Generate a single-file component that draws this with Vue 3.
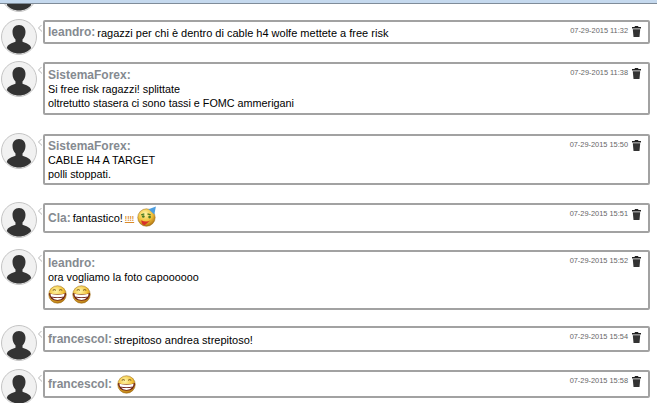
<template>
  <div class="chat">
    <div class="top-bar"></div>
    <div class="cut-row">
      <svg class="avatar cut-avatar" viewBox="0 0 36 36"><use href="#person" /></svg>
    </div>

    <svg width="0" height="0" class="defs">
      <defs>
        <g id="person">
          <circle cx="18" cy="18" r="17.500" fill="#f1f1f1" stroke="#c4c4c4" stroke-width="1" />
          <path d="M18 6c-4.200 0-6.500 3.200-6.500 7 0 3 1.300 5.800 3 7.500v2.300c-3.500 1.200-8 2.400-8.700 6.200 2.700 3.300 7 5.500 12.200 5.500s9.500-2.200 12.200-5.500c-.7-3.800-5.200-5-8.700-6.200v-2.300c1.700-1.700 3-4.500 3-7.500 0-3.800-2.300-7-6.500-7z" fill="#333" />
        </g>
        <radialGradient id="ball" cx="42%" cy="30%" r="75%">
          <stop offset="0" stop-color="#fff6a8" />
          <stop offset="0.55" stop-color="#f2c23a" />
          <stop offset="1" stop-color="#a9690c" />
        </radialGradient>
        <g id="grin">
          <circle cx="9" cy="9" r="8.300" fill="url(#ball)" stroke="#9a6a14" stroke-width="0.500" />
          <path d="M4.500 5q1.500-1.200 3 0M10.500 5q1.500-1.200 3 0" fill="none" stroke="#6b4a10" stroke-width="0.900" />
          <path d="M.8 7.500q8.200 3 16.400 0q-.4 7-8.200 7.500q-7.800-.5-8.200-7.500z" fill="#6e1f14" />
          <path d="M2.300 8.400q6.700 2 13.400 0l-.5 2.500q-6.200 1.400-12.400 0z" fill="#fff" />
          <path d="M3.800 11.800q5.200 1.100 10.400 0q-1.500 2.200-5.200 2.400q-3.700-.2-5.200-2.400z" fill="#fff" />
        </g>
      </defs>
    </svg>

    <div v-for="m in messages" :key="m.time" class="row" :class="m.cls">
      <svg class="avatar" viewBox="0 0 36 36"><use href="#person" /></svg>
      <div class="box">
        <svg class="tail" width="5" height="7" viewBox="0 0 5 7">
          <path d="M4 0h1M3 1h1M2 2h1M1 3h1M2 4h1M3 5h1M4 6h1" stroke="#b5b5b5" stroke-width="1" />
        </svg>
        <div class="meta">
          <span class="time">{{ m.time }}</span>
          <svg class="trash" width="9" height="11" viewBox="0 0 9 11">
            <path d="M3 0h3l.5 1H9v1.500H0V1h2.500z" fill="#222" />
            <path d="M.8 3.200h7.400L7.500 11h-6z" fill="#333" />
          </svg>
        </div>
        <template v-if="m.block">
          <div class="name">{{ m.name }}:</div>
          <div v-for="l in m.lines" :key="l" class="text">{{ l }}</div>
          <div v-if="m.grins" class="smileys">
            <svg v-for="n in m.grins" :key="n" class="smiley" viewBox="0 0 18 18"><use href="#grin" /></svg>
          </div>
        </template>
        <div v-else class="inline">
          <span class="name">{{ m.name }}:</span>
          <span v-if="m.text" class="text">{{ m.text }}</span>
          <span v-if="m.party" class="bang">!!!!</span>
          <svg v-if="m.party" class="smiley party" viewBox="0 0 20 20">
            <circle cx="9" cy="11" r="8.300" fill="url(#ball)" stroke="#9a6a14" stroke-width="0.500" />
            <path d="M11 3l7-2.500-1.500 7.500z" fill="#4f9fe0" />
            <path d="M4 8.500l3-1M10 7.500l3 1" stroke="#4b7a20" stroke-width="1.200" />
            <circle cx="6" cy="10" r="1.300" fill="#4b7a20" />
            <circle cx="12" cy="10.500" r="1.300" fill="#4b7a20" />
            <path d="M4 13.500q5 2.500 9 0l-5.500 4.500q-3 .5-3.500-4.500z" fill="#d8302a" />
          </svg>
          <svg v-if="m.grins" class="smiley grin-inline" viewBox="0 0 18 18"><use href="#grin" /></svg>
        </div>
      </div>
    </div>
  </div>
</template>

<script setup>
const messages = [
  { cls: 'r1', name: 'leandro', text: 'ragazzi per chi è dentro di cable h4 wolfe mettete a free risk', time: '07-29-2015 11:32' },
  { cls: 'r2', name: 'SistemaForex', block: true, lines: ['Si free risk ragazzi! splittate', 'oltretutto stasera ci sono tassi e FOMC ammerigani'], time: '07-29-2015 11:38' },
  { cls: 'r3', name: 'SistemaForex', block: true, lines: ['CABLE H4 A TARGET', 'polli stoppati.'], time: '07-29-2015 15:50' },
  { cls: 'r4', name: 'Cla', text: 'fantastico!', party: true, time: '07-29-2015 15:51' },
  { cls: 'r5', name: 'leandro', block: true, lines: ['ora vogliamo la foto capoooooo'], grins: 2, time: '07-29-2015 15:52' },
  { cls: 'r6', name: 'francescol', text: 'strepitoso andrea strepitoso!', time: '07-29-2015 15:54' },
  { cls: 'r7', name: 'francescol', grins: 1, time: '07-29-2015 15:58' }
]
</script>

<style scoped>
.chat {
  width: 657px;
  height: 403px;
  overflow: hidden;
  background: #fff;
  font-family: "Liberation Sans", Arial, sans-serif;
}

.defs {
  position: absolute;
}

.top-bar {
  height: 4px;
  background: #c5d9ee;
  border-bottom: 1px solid #7f8c99;
  box-sizing: border-box;
}

.cut-row {
  height: 8px;
  overflow: hidden;
  display: flex;
  align-items: flex-end;
  padding-left: 1px;
  margin-bottom: 7px;
}

.cut-avatar {
  flex-shrink: 0;
}

.row {
  display: flex;
  align-items: flex-start;
  padding-left: 1px;
  padding-right: 7px;
}

.avatar {
  width: 36px;
  height: 36px;
  flex-shrink: 0;
  margin-right: 6px;
}

.box {
  position: relative;
  flex: 1;
  box-sizing: border-box;
  margin-top: 1px;
  border: 2px solid #a2a2a2;
  border-radius: 2px;
  padding: 0 0 0 3px;
}

.tail {
  position: absolute;
  left: -8px;
  top: 3px;
}

.meta {
  position: absolute;
  right: 7px;
  top: 3px;
  display: flex;
  align-items: center;
  gap: 4px;
}

.time {
  font-size: 7.400px;
  color: #666;
  line-height: 12px;
}

.trash {
  display: block;
}

.name {
  font-size: 12px;
  font-weight: bold;
  color: #858a90;
  line-height: 14px;
}

.text {
  font-size: 10.800px;
  color: #000;
  line-height: 14px;
}

.inline .text {
  font-size: 11px;
}

.r1 .inline .text,
.r6 .inline .text {
  margin-top: 2px;
}

.inline {
  display: flex;
  align-items: center;
  gap: 2px;
  height: 100%;
}

.bang {
  font-size: 7px;
  font-weight: bold;
  color: #d98a2a;
  text-decoration: underline;
}

.smileys {
  display: flex;
  gap: 5px;
  margin-top: 1px;
}

.smiley {
  width: 19px;
  height: 19px;
  display: block;
}

.party {
  width: 21px;
  height: 21px;
  margin: -3px 0 0 1px;
}

.grin-inline {
  margin-left: 3px;
}

.r1 { margin-bottom: 6px; }
.r1 .box { height: 24px; }
.r2 { margin-bottom: 18px; }
.r2 .box { height: 53px; padding-top: 4px; }
.r3 { margin-bottom: 17px; }
.r3 .box { height: 51px; padding-top: 3px; }
.r4 { margin-bottom: 11px; }
.r4 .box { height: 30px; }
.r5 { margin-bottom: 15px; }
.r5 .box { height: 60px; padding-top: 4px; }
.r6 { margin-bottom: 8px; }
.r6 .box { height: 26px; }
.r7 .box { height: 28px; }
</style>
